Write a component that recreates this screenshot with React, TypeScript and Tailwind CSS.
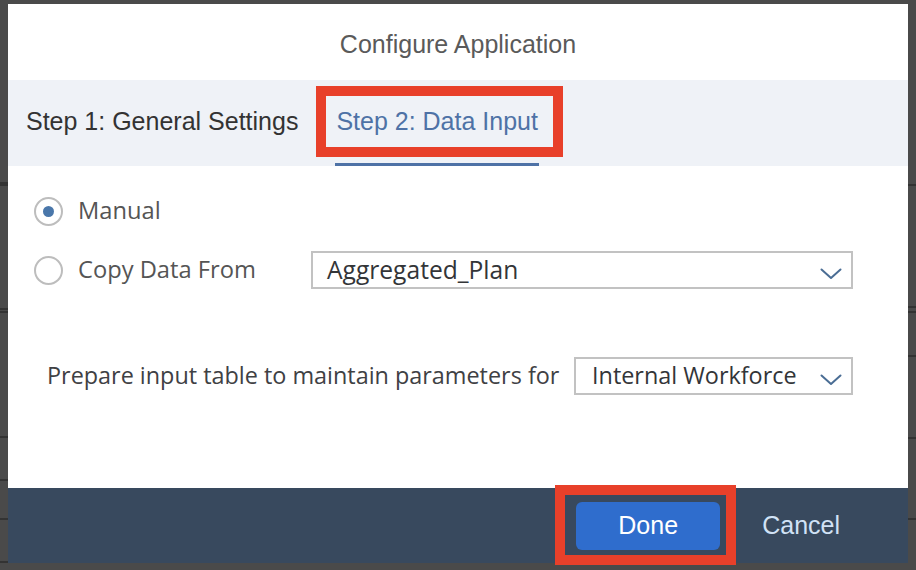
import React from "react";

const sans = { fontFamily: '"Liberation Sans", Arial, Helvetica, sans-serif' };
const body = { fontFamily: '"Open Sans", "Noto Sans", sans-serif' };

function Chevron() {
  return (
    <svg width="22" height="12" viewBox="0 0 22 12" fill="none">
      <path d="M1.5 1.5 L11 10 L20.5 1.5" stroke="#4a6d94" strokeWidth="2" strokeLinecap="round" strokeLinejoin="round" />
    </svg>
  );
}

function Radio({ checked }: { checked?: boolean }) {
  return (
    <div className="w-[29px] h-[29px] rounded-full border-2 border-[#bdbdbd] bg-white flex items-center justify-center shrink-0">
      {checked && <div className="w-[11px] h-[11px] rounded-full bg-[#4a77aa]" />}
    </div>
  );
}

function Select({ value, width, padLeft, size }: { value: string; width: string; padLeft: string; size: string }) {
  return (
    <div className={`${width} h-[38px] border-2 border-[#c2c2c2] bg-white flex items-center justify-between ${padLeft} pr-[9px] shrink-0`}>
      <span className={`${size} text-[#333538] leading-none whitespace-nowrap`} style={body}>{value}</span>
      <div className="pt-[8px]"><Chevron /></div>
    </div>
  );
}

export default function App() {
  const leftLines = [182, 184, 308, 311, 436, 479, 518, 561];
  const rightLines = [184, 306, 311, 355, 437, 518];
  return (
    <div className="relative w-[916px] h-[570px] bg-[#4a4a4a] overflow-hidden">
      {leftLines.map((y) => (
        <div key={"l" + y} className="absolute left-0 w-[8px] h-[2px] bg-[#333333]" style={{ top: y }} />
      ))}
      {rightLines.map((y) => (
        <div key={"r" + y} className="absolute right-0 w-[8px] h-[2px] bg-[#333333]" style={{ top: y }} />
      ))}

      <div className="pt-[4px] pl-[8px]">
        <div className="w-[900px] h-[559px] bg-white flex flex-col">
          {/* Title */}
          <div className="h-[76px] flex items-center justify-center pt-[6px]">
            <span className="text-[25px] text-[#5a5a5a]" style={sans}>Configure Application</span>
          </div>

          {/* Tabs */}
          <div className="h-[86px] bg-[#eff2f7] flex items-stretch pl-[18px]">
            <div className="flex items-center pb-[2px]">
              <span className="text-[25px] text-[#333333]" style={sans}>Step 1: General Settings</span>
            </div>
            <div className="ml-[37px] w-[204px] flex items-center justify-start border-b-[3px] border-[#4e72a6] pl-[1px] pt-[1px]">
              <span className="text-[25px] text-[#4e72a6] whitespace-nowrap" style={sans}>Step 2: Data Input</span>
            </div>
          </div>

          {/* Body */}
          <div className="flex-1 flex flex-col pt-[26px]">
            <div className="h-[38px] flex items-center pl-[26px]">
              <Radio checked />
              <span className="ml-[15px] text-[23.7px] text-[#555555]" style={body}>Manual</span>
            </div>
            <div className="mt-[21px] h-[38px] flex items-center pl-[26px]">
              <Radio />
              <span className="ml-[15px] w-[233px] text-[23.7px] text-[#555555] whitespace-nowrap" style={body}>Copy Data From</span>
              <Select value="Aggregated_Plan" width="w-[542px]" padLeft="pl-[14px]" size="text-[24.6px]" />
            </div>
            <div className="mt-[68px] h-[38px] flex items-center pl-[39px] pr-[55px]">
              <span className="text-[23.4px] text-[#3f4144] whitespace-nowrap" style={body}>Prepare input table to maintain parameters for</span>
              <div className="ml-auto">
                <Select value="Internal Workforce" width="w-[279px]" padLeft="pl-[16px]" size="text-[23.4px]" />
              </div>
            </div>
          </div>

          {/* Footer */}
          <div className="h-[75px] bg-[#38495e] flex items-center justify-end pr-[68px]">
            <button className="w-[144px] h-[48px] rounded-[6px] bg-[#2f6dcd] text-white text-[25px] mt-[1px]" style={sans}>
              Done
            </button>
            <span className="ml-[42px] text-[25px] text-[#d1e2f6]" style={sans}>Cancel</span>
          </div>
        </div>
      </div>

      {/* Highlight annotations */}
      <div className="absolute left-[316px] top-[86px] w-[247px] h-[71px] border-[10px] border-[#e8402a] pointer-events-none" />
      <div className="absolute left-[555px] top-[485px] w-[181px] h-[80px] border-[10px] border-[#e8402a] pointer-events-none" />
    </div>
  );
}
